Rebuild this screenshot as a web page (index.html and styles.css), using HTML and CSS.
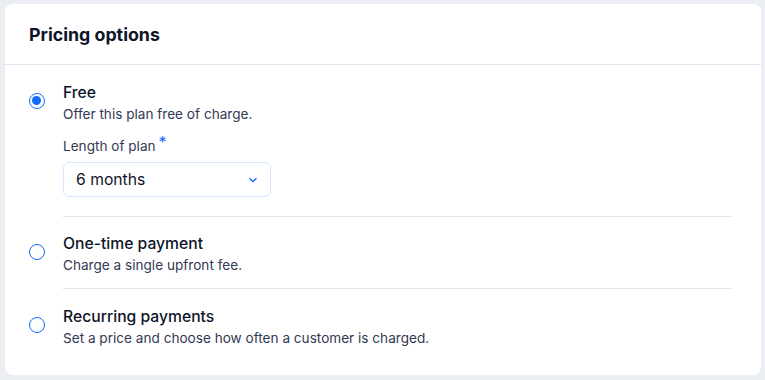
FILE: index.html
```html
<!DOCTYPE html>
<html lang="en">
<head>
    <meta charset="UTF-8">
    <title>Pricing options</title>
    <link rel="stylesheet" href="styles.css">
</head>
<body>
    <div class="card">
        <div class="card-header">
            <h2>Pricing options</h2>
        </div>
        <div class="card-body">
            <div class="option">
                <span class="radio checked"></span>
                <div class="option-text">
                    <div class="option-title">Free</div>
                    <div class="option-desc">Offer this plan free of charge.</div>
                    <div class="field">
                        <div class="field-label">Length of plan<span class="req">*</span></div>
                        <div class="dropdown">
                            <span>6 months</span>
                            <svg width="10" height="6" viewBox="0 0 10 6"><path d="M1.5 1.2 L5 4.5 L8.5 1.2" fill="none" stroke="#116dff" stroke-width="1.3"/></svg>
                        </div>
                    </div>
                </div>
            </div>
            <div class="option">
                <span class="radio"></span>
                <div class="option-text">
                    <div class="option-title">One-time payment</div>
                    <div class="option-desc">Charge a single upfront fee.</div>
                </div>
            </div>
            <div class="option last">
                <span class="radio"></span>
                <div class="option-text">
                    <div class="option-title">Recurring payments</div>
                    <div class="option-desc">Set a price and choose how often a customer is charged.</div>
                </div>
            </div>
        </div>
    </div>
</body>
</html>
```

FILE: styles.css
```css
body {
    margin: 0;
    padding: 4px 4px 5px 5px;
    background-color: #ebeef3;
    font-family: Inter, "Noto Sans", sans-serif;
    color: #0e1529;
}
.card {
    width: 756px;
    height: 371px;
    background-color: #fff;
    border-radius: 8px;
    box-sizing: border-box;
}
.card-header {
    height: 60px;
    padding: 0 24px;
    display: flex;
    align-items: center;
    border-bottom: 1px solid #dfe5eb;
}
.card-header h2 {
    margin: 0;
    font-size: 17.8px;
    font-weight: 700;
}
.card-body {
    padding: 17px 30px 0 24px;
}
.option {
    display: flex;
    gap: 18px;
}
.option.last {
    margin-top: 1px;
}
.radio {
    flex: none;
    width: 16px;
    height: 16px;
    box-sizing: border-box;
    border: 1.5px solid #116dff;
    border-radius: 50%;
    margin-top: 11px;
    position: relative;
}
.radio.checked::after {
    content: "";
    position: absolute;
    left: 2px;
    top: 2px;
    width: 9px;
    height: 9px;
    border-radius: 50%;
    background-color: #116dff;
}
.option-text {
    flex: 1;
    padding-bottom: 13px;
    border-bottom: 1px solid #dfe5eb;
    margin-bottom: 16px;
}
.option.last .option-text {
    border-bottom: none;
}
.option-title {
    font-size: 15.7px;
    font-weight: 500;
    line-height: 22px;
}
.option-desc {
    font-size: 13.6px;
    line-height: 20px;
    color: #333853;
}
.field {
    margin-top: 12px;
    margin-bottom: 6px;
}
.field-label {
    font-size: 13.6px;
    line-height: 18px;
    color: #333853;
}
.req {
    color: #116dff;
    margin-left: 3px;
    font-size: 16px;
    position: relative;
    top: -3px;
}
.dropdown {
    margin-top: 7px;
    width: 208px;
    height: 35px;
    box-sizing: border-box;
    border: 1px solid #d6e6fe;
    border-radius: 6px;
    display: flex;
    align-items: center;
    justify-content: space-between;
    padding: 0 12px 0 12px;
    font-size: 15.7px;
}
```
